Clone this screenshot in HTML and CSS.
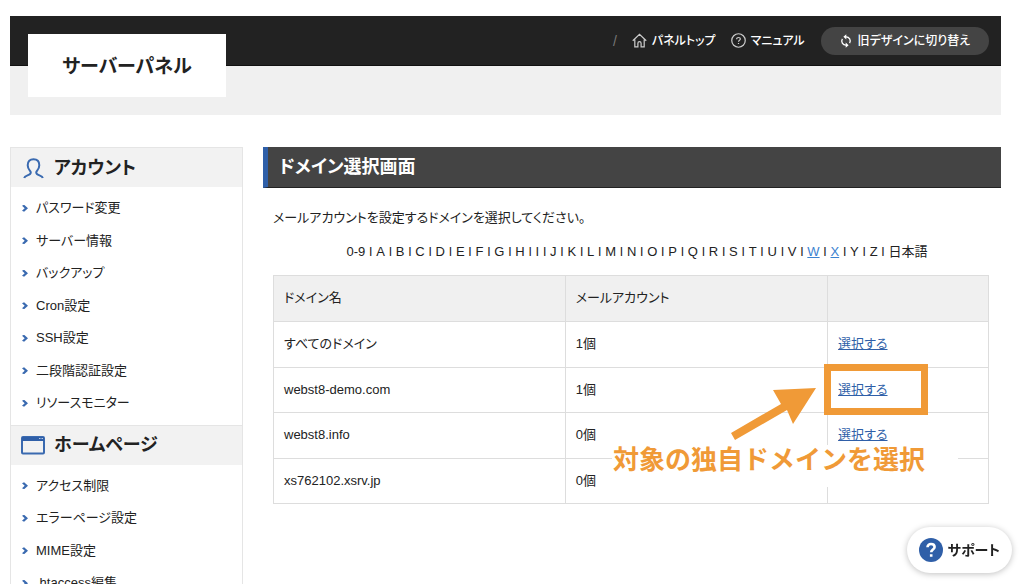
FILE: index.html
```html
<!DOCTYPE html>
<html lang="ja">
<head>
<meta charset="utf-8">
<meta name="viewport" content="width=device-width, initial-scale=1">
<title>サーバーパネル</title>
<link rel="stylesheet" href="styles.css">
</head>
<body>
<div class="page">
  <header class="header">
    <div class="topbar">
      <nav class="topnav">
        <span class="slash">/</span>
        <a class="toplink" href="#"><svg class="icon-home" viewBox="0 0 16 16"><path d="M.8 8.200 8 1.500l7.200 6.700M3 7v7.800h3.300V10.800a1.700 1.700 0 0 1 3.400 0v4H13V7"/></svg>パネルトップ</a>
        <a class="toplink" href="#"><svg class="icon-help" viewBox="0 0 16 16"><circle cx="8" cy="8" r="7.200"/><path d="M6 6.600C6 5.400 6.900 4.800 8 4.800s2 .7 2 1.700C10 7.700 8 7.800 8 9.200M8 10.600v1.200"/></svg>マニュアル</a>
      </nav>
      <button class="switch" type="button"><svg class="icon-sync" viewBox="0 0 12 14"><path d="M5.500 2.800H6a4.200 4.200 0 0 1 3.600 6.400M6.500 11.200H6a4.200 4.200 0 0 1-3.600-6.400"/><path class="head" d="M6.300.2v5.200L3.400 2.800zM5.700 8.600v5.200l2.900-2.600z"/></svg>旧デザインに切り替え</button>
    </div>
    <h1 class="logo">サーバーパネル</h1>
  </header>
  <div class="columns">
    <aside class="sidebar">
      <h2 class="side-title"><svg class="side-icon" viewBox="0 0 24 24"><path d="M3.200 22c.5-3 6.600-2.400 6.600-5.600 0-1.600-3.100-2.700-3.100-7.200 0-3.900 2.200-6 5.800-6s5.800 2.100 5.800 6c0 4.500-3.100 5.600-3.100 7.200 0 3.200 6.100 2.600 6.600 5.600"/></svg>アカウント</h2>
      <ul class="side-list">
        <li><a href="#">パスワード変更</a></li>
        <li><a href="#">サーバー情報</a></li>
        <li><a href="#">バックアップ</a></li>
        <li><a href="#">Cron設定</a></li>
        <li><a href="#">SSH設定</a></li>
        <li><a href="#">二段階認証設定</a></li>
        <li><a href="#">リソースモニター</a></li>
      </ul>
      <h2 class="side-title"><svg class="side-icon" viewBox="0 0 24 24"><rect x="1" y="4" width="22" height="16.500" rx="1"/><path class="fill" d="M1 4h22v4H1z"/><path class="dots" d="M18 5.500h1.500M20.500 5.500H22"/></svg>ホームページ</h2>
      <ul class="side-list">
        <li><a href="#">アクセス制限</a></li>
        <li><a href="#">エラーページ設定</a></li>
        <li><a href="#">MIME設定</a></li>
        <li><a href="#">.htaccess編集</a></li>
      </ul>
    </aside>
    <main class="main">
      <h2 class="main-title">ドメイン選択画面</h2>
      <div class="content">
        <p class="lead">メールアカウントを設定するドメインを選択してください。</p>
        <p class="index"><span>0-9</span><span>l</span><span>A</span><span>l</span><span>B</span><span>l</span><span>C</span><span>l</span><span>D</span><span>l</span><span>E</span><span>l</span><span>F</span><span>l</span><span>G</span><span>l</span><span>H</span><span>l</span><span>I</span><span>l</span><span>J</span><span>l</span><span>K</span><span>l</span><span>L</span><span>l</span><span>M</span><span>l</span><span>N</span><span>l</span><span>O</span><span>l</span><span>P</span><span>l</span><span>Q</span><span>l</span><span>R</span><span>l</span><span>S</span><span>l</span><span>T</span><span>l</span><span>U</span><span>l</span><span>V</span><span>l</span><a href="#">W</a><span>l</span><a href="#">X</a><span>l</span><span>Y</span><span>l</span><span>Z</span><span>l</span><span>日本語</span></p>
        <div class="table-wrap">
          <table class="domains">
            <thead>
              <tr><th class="col-name" scope="col">ドメイン名</th><th class="col-mail" scope="col">メールアカウント</th><th></th></tr>
            </thead>
            <tbody>
              <tr><td>すべてのドメイン</td><td>1個</td><td><a href="#">選択する</a></td></tr>
              <tr><td>webst8-demo.com</td><td>1個</td><td><a href="#">選択する</a></td></tr>
              <tr><td>webst8.info</td><td>0個</td><td><a href="#">選択する</a></td></tr>
              <tr><td>xs762102.xsrv.jp</td><td>0個</td><td></td></tr>
            </tbody>
          </table>
          <div class="note">対象の独自ドメインを選択</div>
          <svg class="arrow" viewBox="0 0 86 53"><path d="M85 1 42 3l8 14L0 46l4 7 52-30 6 14z"/></svg>
          <div class="frame"></div>
        </div>
      </div>
    </main>
  </div>
</div>
<button class="support" type="button"><svg class="support-icon" viewBox="0 0 24 24"><circle cx="12" cy="12" r="12"/><path d="M8.500 9.300C8.500 7.200 10 6 12 6s3.600 1.200 3.600 3.100c0 2.500-3.400 2.500-3.400 5.200M12.200 16.200v2.600"/></svg>サポート</button>
</body>
</html>
```
FILE: styles.css
```css
* { box-sizing: border-box; }
html { height: 100%; overflow: hidden; }
body {
  margin: 0;
  height: 100%;
  overflow: hidden;
  background: #fff;
  color: #222;
  font: 13px/20px "Liberation Sans", "Noto Sans CJK JP", sans-serif;
  font-feature-settings: "palt";
}
h1, h2, p, ul { margin: 0; padding: 0; }
ul { list-style: none; }
button { font: inherit; font-feature-settings: inherit; border: 0; cursor: pointer; }
svg { flex: none; }

.page { padding: 16px 23px 0 10px; }

.header { position: relative; height: 99px; background: #f0f0f0; }
.topbar {
  display: flex;
  justify-content: flex-end;
  align-items: center;
  gap: 16px;
  height: 50px;
  padding-right: 12px;
  background: #222;
  border-bottom: 1px solid #111;
  font-size: 12px;
  font-weight: 500;
}
.topnav { display: flex; align-items: center; gap: 15px; }
.slash { color: #777; font-size: 14px; }
.toplink { display: flex; align-items: center; gap: 5px; color: #fff; text-decoration: none; }
.icon-home, .icon-help { width: 15px; height: 15px; fill: none; stroke: #ccc; stroke-width: 1.3; }
.icon-sync { width: 12px; height: 14px; fill: none; stroke: #fff; stroke-width: 1.3; }
.icon-sync .head { fill: #fff; stroke: none; }
.switch {
  display: flex;
  align-items: center;
  gap: 6px;
  height: 28px;
  padding: 0 19px;
  border-radius: 14px;
  background: #444;
  color: #fff;
}
.logo {
  position: absolute;
  left: 18px;
  top: 18px;
  width: 198px;
  height: 63px;
  padding-top: 2px;
  background: #fff;
  text-align: center;
  font-size: 19px;
  line-height: 61px;
}

.columns { display: flex; gap: 20px; padding-top: 32px; align-items: flex-start; }
.sidebar { flex: none; width: 233px; border: 1px solid #e5e5e5; border-top: 0; }
.side-title {
  display: flex;
  align-items: center;
  gap: 9px;
  height: 40px;
  padding-left: 10px;
  border-top: 1px solid #e5e5e5;
  background: #f2f2f2;
  font-size: 18px;
}
.side-icon { width: 24px; height: 24px; fill: none; stroke: #3a6ab0; stroke-width: 2; }
.side-icon .fill { fill: #2f5fa8; stroke: none; }
.side-icon .dots { stroke: #b9cbe4; stroke-width: 1; }
.side-list { padding: 5px 0; line-height: 2.5; }
.side-list a {
  display: flex;
  align-items: center;
  gap: 8px;
  padding-left: 11px;
  color: #222;
  text-decoration: none;
}
.side-list a::before {
  content: "";
  width: 6px;
  height: 7px;
  background: #3a6ab0;
  clip-path: polygon(0 15%, 35% 0, 100% 50%, 35% 100%, 0 85%, 45% 50%);
}

.main { flex: 1; min-width: 0; }
.main-title {
  height: 41px;
  padding-left: 11px;
  border-left: 5px solid #2f5fa8;
  border-bottom: 1px solid #222;
  background: #444;
  color: #fff;
  font-size: 18px;
  line-height: 40px;
}
.content { padding: 20px 0 0 10px; }
.index { display: flex; flex-wrap: wrap; justify-content: center; column-gap: 4px; padding-top: 14px; }
.index a { color: #3b82d0; }
.table-wrap { position: relative; margin: 13px 12px 0 0; }
.domains { width: 100%; border-collapse: collapse; table-layout: fixed; }
.domains th, .domains td {
  padding: 12px 10px 13px;
  border: 1px solid #ddd;
  text-align: left;
  font-weight: 400;
}
.domains th { background: #f0f0f0; }
.domains td { line-height: 1.5; }
.domains a { color: #2f5fa8; }
.col-name { width: 40.8%; }
.col-mail { width: 36.7%; }

/* Guide overlays on the table */
.note {
  position: absolute;
  right: 31px;
  top: 170px;
  width: 346px;
  height: 42px;
  padding-left: 1px;
  background: #fff;
  color: #f09a37;
  font-size: 26px;
  font-weight: 700;
  line-height: 30px;
  font-feature-settings: normal;
  white-space: nowrap;
}
.arrow { position: absolute; right: 172px; top: 112px; width: 86px; height: 53px; fill: #f09a37; }
.frame { position: absolute; right: 61px; top: 89px; width: 104px; height: 51px; border: 7px solid #f09a37; pointer-events: none; }

.support {
  position: fixed;
  right: 12px;
  bottom: 11px;
  display: flex;
  align-items: center;
  gap: 5px;
  height: 46px;
  padding: 0 12px;
  border-radius: 23px;
  background: #fff;
  color: #222;
  box-shadow: 0 1px 6px rgba(0, 0, 0, .25);
  font-size: 14px;
  font-weight: 700;
}
.support-icon { width: 24px; height: 24px; fill: #2f5fa8; }
.support-icon path { fill: none; stroke: #fff; stroke-width: 2.6; }
```
